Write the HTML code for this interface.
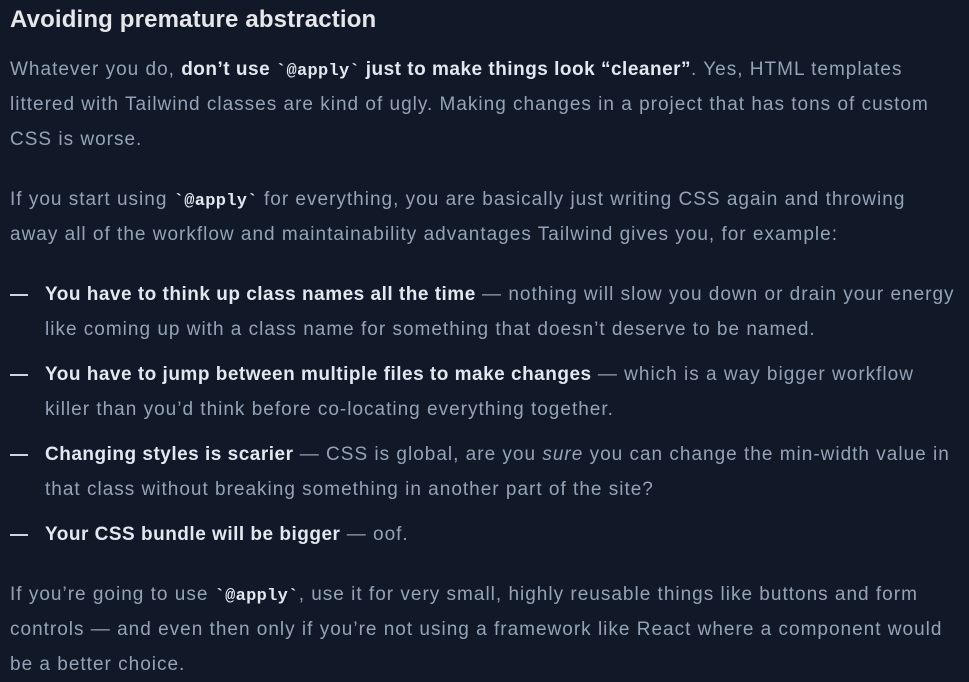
<!DOCTYPE html>
<html><head><meta charset="utf-8"><style>
html,body{margin:0;padding:0;background:#111827;width:969px;height:682px;overflow:hidden}
body{font-family:"Liberation Sans",sans-serif;color:#94a3b8;font-size:19px;letter-spacing:1.0px}
h2{position:absolute;left:10px;top:5px;margin:0;font-size:24px;color:#e5e7eb;font-weight:bold;letter-spacing:0.15px;line-height:30px}
.l{position:absolute;white-space:nowrap;line-height:35px;height:35px}
b{color:#e2e8f0;letter-spacing:0.5px}
code{font-family:"Liberation Mono","DejaVu Sans Mono",monospace;font-weight:bold;color:#e2e8f0;font-size:17px;letter-spacing:0.3px}
.d{position:absolute;left:10px;width:18px;height:2px;background:#cbd5e1}
</style></head><body>
<h2>Avoiding premature abstraction</h2>
<div class="l" style="left:10px;top:52px">Whatever you do, <b>don’t use <code>`@apply`</code> just to make things look “cleaner”</b>. Yes, HTML templates</div>
<div class="l" style="left:10px;top:87px">littered with Tailwind classes are kind of ugly. Making changes in a project that has tons of custom</div>
<div class="l" style="left:10px;top:122px">CSS is worse.</div>
<div class="l" style="left:10px;top:182px">If you start using <code>`@apply`</code> for everything, you are basically just writing CSS again and throwing</div>
<div class="l" style="left:10px;top:217px">away all of the workflow and maintainability advantages Tailwind gives you, for example:</div>
<div class="d" style="top:294px"></div>
<div class="l" style="left:45px;top:277px"><b>You have to think up class names all the time</b> — nothing will slow you down or drain your energy</div>
<div class="l" style="left:45px;top:312px">like coming up with a class name for something that doesn’t deserve to be named.</div>
<div class="d" style="top:374px"></div>
<div class="l" style="left:45px;top:357px"><b>You have to jump between multiple files to make changes</b> — which is a way bigger workflow</div>
<div class="l" style="left:45px;top:392px">killer than you’d think before co-locating everything together.</div>
<div class="d" style="top:454px"></div>
<div class="l" style="left:45px;top:437px"><b>Changing styles is scarier</b> — CSS is global, are you <i>sure</i> you can change the min-width value in</div>
<div class="l" style="left:45px;top:472px">that class without breaking something in another part of the site?</div>
<div class="d" style="top:534px"></div>
<div class="l" style="left:45px;top:517px"><b>Your CSS bundle will be bigger</b> — oof.</div>
<div class="l" style="left:10px;top:577px">If you’re going to use <code>`@apply`</code>, use it for very small, highly reusable things like buttons and form</div>
<div class="l" style="left:10px;top:612px">controls — and even then only if you’re not using a framework like React where a component would</div>
<div class="l" style="left:10px;top:647px">be a better choice.</div>
</body></html>
